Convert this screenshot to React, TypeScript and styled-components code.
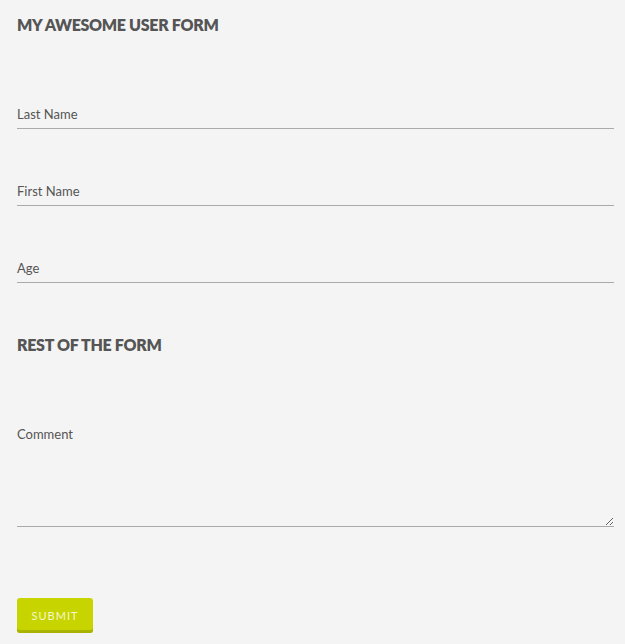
import React from "react";
import styled, { createGlobalStyle } from "styled-components";

const Global = createGlobalStyle`
  html, body { margin: 0; padding: 0; background: #f4f4f4; }
  body { font-family: Lato, "Open Sans", sans-serif; color: #555; }
  * { box-sizing: border-box; }
`;

const Form = styled.form`
  display: flex;
  flex-direction: column;
  padding: 15px 11px 12px 17px;
`;

const Heading = styled.h2<{ $after: number }>`
  margin: 0 0 ${(p) => p.$after}px;
  font-size: 16px;
  line-height: 20px;
  font-weight: 800;
  letter-spacing: -0.3px;
  color: #555;
  text-transform: uppercase;
`;

const Field = styled.div<{ $after: number }>`
  display: flex;
  flex-direction: column;
  margin-bottom: ${(p) => p.$after}px;
`;

const Label = styled.label`
  font-size: 13px;
  line-height: 18px;
  color: #555;
  position: relative;
  z-index: 1;
`;

const Input = styled.input`
  height: 6px;
  padding: 0;
  border: none;
  border-bottom: 1px solid #aaa;
  background: transparent;
  outline: none;
  font: inherit;
`;

const TextArea = styled.textarea`
  height: 102px;
  margin-top: -18px;
  padding: 0;
  border: none;
  border-bottom: 1px solid #aaa;
  background: transparent;
  outline: none;
  resize: vertical;
  font: inherit;
`;

const Button = styled.button`
  align-self: flex-start;
  width: 76px;
  height: 35px;
  padding: 0;
  border: none;
  border-radius: 3px;
  background: #c8d400;
  box-shadow: inset 0 -3px 0 #a9b400;
  color: #f4f7d0;
  font-family: Lato, sans-serif;
  font-size: 11px;
  letter-spacing: 1px;
  text-transform: uppercase;
  cursor: pointer;
`;

export default function App() {
  return (
    <>
      <Global />
      <Form onSubmit={(e) => e.preventDefault()}>
        <Heading $after={70}>My awesome user form</Heading>
        <Field $after={53}>
          <Label htmlFor="last">Last Name</Label>
          <Input id="last" />
        </Field>
        <Field $after={53}>
          <Label htmlFor="first">First Name</Label>
          <Input id="first" />
        </Field>
        <Field $after={52}>
          <Label htmlFor="age">Age</Label>
          <Input id="age" />
        </Field>
        <Heading $after={70}>Rest of the form</Heading>
        <Field $after={71}>
          <Label htmlFor="comment">Comment</Label>
          <TextArea id="comment" />
        </Field>
        <Button type="submit">Submit</Button>
      </Form>
    </>
  );
}
